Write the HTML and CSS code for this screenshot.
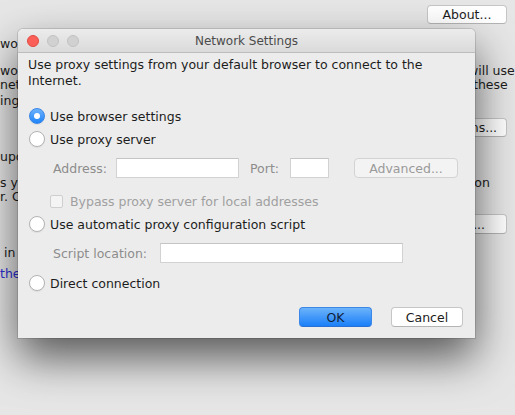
FILE: index.html
```html
<!DOCTYPE html>
<html>
<head>
<meta charset="utf-8">
<link rel="stylesheet" href="styles.css">
</head>
<body>
<div class="bg">
  <div class="bg-row top-row"><span></span><button class="btn about">About...</button></div>
  <div class="bg-row line m13"><span class="lt">wor</span><span class="rt"></span></div>
  <div class="bg-row line m13"><span class="lt">wor</span><span class="rt"><span class="i0">will use</span></span></div>
  <div class="bg-row line"><span class="lt">net</span><span class="rt"><span class="i7">these</span></span></div>
  <div class="bg-row line m2"><span class="lt">ing</span><span class="rt"></span></div>
  <div class="bg-row brow m10"><span></span><button class="btn side">Options...</button></div>
  <div class="bg-row line m13"><span class="lt">upo</span><span class="rt"></span></div>
  <div class="bg-row line m12"><span class="lt">s yo</span><span class="rt"><span class="i3">tion</span></span></div>
  <div class="bg-row line"><span class="lt">r. C</span><span class="rt"></span></div>
  <div class="bg-row brow2 m10"><span></span><button class="btn side">Edit...</button></div>
  <div class="bg-row line m12"><span class="lt ind">in</span><span class="rt"></span></div>
  <div class="bg-row line m7"><span class="lt link">the</span><span class="rt"></span></div>
</div>

<div class="dialog">
  <div class="titlebar">
    <div class="lights"><span class="light close"></span><span class="light"></span><span class="light"></span></div>
    <div class="title">Network Settings</div>
    <div></div>
  </div>
  <div class="content">
    <p class="intro">Use proxy settings from your default browser to connect to the<br>Internet.</p>
    <div class="opt r1"><span class="radio checked"></span><span>Use browser settings</span></div>
    <div class="opt r2"><span class="radio"></span><span>Use proxy server</span></div>
    <div class="addr-row">
      <span class="dim">Address:</span>
      <span class="field addr"></span>
      <span class="dim port-lbl">Port:</span>
      <span class="field port"></span>
      <span class="btn adv">Advanced...</span>
    </div>
    <div class="bypass-row"><span class="check"></span><span class="dim2">Bypass proxy server for local addresses</span></div>
    <div class="opt r3"><span class="radio"></span><span>Use automatic proxy configuration script</span></div>
    <div class="script-row"><span class="dim">Script location:</span><span class="field script"></span></div>
    <div class="opt r4"><span class="radio"></span><span>Direct connection</span></div>
    <div class="actions">
      <span class="btn ok">OK</span>
      <span class="btn cancel">Cancel</span>
    </div>
  </div>
</div>
</body>
</html>
```

FILE: styles.css
```css
html, body {
  margin: 0;
  padding: 0;
}
body {
  width: 515px;
  height: 415px;
  overflow: hidden;
  background: #e6e6e6;
  font-family: "DejaVu Sans", sans-serif;
  font-size: 12.5px;
  color: #1c1c1c;
  position: relative;
}

/* background window */
.bg {
  display: flex;
  flex-direction: column;
  padding-top: 5px;
}
.bg-row {
  display: grid;
  grid-template-columns: 1fr 47px;
  white-space: nowrap;
}
.line {
  height: 14px;
  line-height: 14px;
}
.lt { overflow: hidden; }
.lt.ind { padding-left: 4px; }
.lt.link { color: #2c2fd6; }
.rt { overflow: visible; }
.i0 { margin-left: 0; }
.i7 { margin-left: 5px; }
.i3 { margin-left: -2px; }
.m2 { margin-top: 2px; }
.m7 { margin-top: 7px; }
.m10 { margin-top: 10px; }
.m12 { margin-top: 12px; }
.m13 { margin-top: 13px; }

.top-row {
  grid-template-columns: 1fr auto;
  padding-right: 8px;
}
.brow, .brow2 {
  grid-template-columns: 1fr auto;
  padding-right: 8px;
}
.btn {
  box-sizing: border-box;
  font-family: "DejaVu Sans", sans-serif;
  font-size: 12.5px;
  color: #1c1c1c;
  background: #fff;
  border: 1px solid #c6c6c6;
  border-bottom-color: #b4b4b4;
  border-radius: 4px;
  display: flex;
  align-items: center;
  justify-content: center;
  padding: 0;
  margin: 0;
}
.about {
  width: 80px;
  height: 19px;
}
.side {
  width: 80px;
  height: 19px;
}
.brow2 .side { height: 20px; }

/* dialog */
.dialog {
  position: absolute;
  left: 18px;
  top: 29px;
  width: 457px;
  height: 309px;
  box-sizing: border-box;
  background: #ececec;
  border-radius: 5px 5px 0 0;
  box-shadow: 0 20px 44px rgba(0, 0, 0, 0.62), 0 0 0 1px rgba(0, 0, 0, 0.12);
  display: flex;
  flex-direction: column;
}
.titlebar {
  height: 24px;
  box-sizing: border-box;
  display: grid;
  grid-template-columns: 1fr auto 1fr;
  align-items: center;
  background: linear-gradient(#ececec, #dadada);
  border-bottom: 1px solid #bdbdbd;
  border-radius: 5px 5px 0 0;
}
.lights {
  display: flex;
  gap: 8px;
  padding-left: 9px;
}
.light {
  width: 12px;
  height: 12px;
  box-sizing: border-box;
  border-radius: 50%;
  background: #d1d1d1;
  border: 1px solid #c2c2c2;
}
.light.close {
  background: #fc5f57;
  border-color: #df4a43;
}
.title {
  font-size: 12px;
  color: #4b4b4b;
}

.content {
  padding: 4px 12px 11px 10px;
  display: flex;
  flex-direction: column;
}
.intro {
  margin: 0;
  line-height: 16px;
}
.opt {
  height: 22px;
  display: flex;
  align-items: center;
  gap: 5px;
  margin-left: 1px;
}
.r1 { margin-top: 16px; }
.r2 { margin-top: 1px; }
.r3 { margin-top: 4px; }
.r4 { margin-top: 9px; }
.radio {
  width: 16px;
  height: 16px;
  box-sizing: border-box;
  border-radius: 50%;
  background: #fff;
  border: 1px solid #b3b3b3;
  box-shadow: 0 1px 1px rgba(0, 0, 0, 0.06);
  display: flex;
  align-items: center;
  justify-content: center;
}
.radio.checked {
  background: linear-gradient(#6db2fb, #1f84fa);
  border-color: #3a86e6;
}
.radio.checked::after {
  content: "";
  width: 6px;
  height: 6px;
  border-radius: 50%;
  background: #fff;
}

.dim { color: #8d8d8d; }
.dim2 { color: #a0a0a0; }

.addr-row {
  margin-top: 8px;
  height: 20px;
  display: flex;
  align-items: center;
  padding-left: 25px;
}
.field {
  box-sizing: border-box;
  height: 20px;
  background: #fff;
  border: 1px solid #d2d2d2;
  border-top-color: #c4c4c4;
}
.addr { width: 123px; margin-left: 9px; }
.port-lbl { margin-left: 11px; }
.port { width: 39px; margin-left: 11px; }
.adv {
  width: 104px;
  height: 20px;
  margin-left: 25px;
  background: #f3f3f3;
  border-color: #d3d3d3;
  color: #9a9a9a;
}

.bypass-row {
  margin-top: 15px;
  height: 16px;
  display: flex;
  align-items: center;
  padding-left: 22px;
  gap: 7px;
}
.check {
  width: 13px;
  height: 13px;
  box-sizing: border-box;
  background: #f4f4f4;
  border: 1px solid #cfcfcf;
  border-radius: 2px;
}

.script-row {
  margin-top: 8px;
  height: 20px;
  display: flex;
  align-items: center;
  padding-left: 25px;
}
.script { width: 243px; margin-left: 13px; }

.actions {
  margin-top: 13px;
  display: flex;
  justify-content: flex-end;
  gap: 19px;
}
.ok {
  width: 73px;
  height: 20px;
  background: linear-gradient(#6cb3fa, #1a7ff9);
  border: 1px solid #3c87e8;
  border-bottom-color: #2a70d4;
  color: #10213a;
}
.cancel {
  width: 72px;
  height: 20px;
}
```
